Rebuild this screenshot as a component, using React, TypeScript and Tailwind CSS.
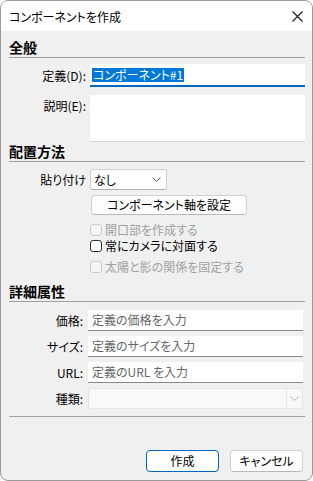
function Chevron({ color }: { color: string }) {
  return (
    <svg width="9" height="5" viewBox="0 0 9 5" fill="none">
      <path d="M0.5 0.5 L4.5 4.5 L8.5 0.5" stroke={color} strokeWidth="1" />
    </svg>
  );
}

function Section({ title }: { title: string }) {
  return (
    <div className="ml-[8px] mr-[7px] flex h-[20px] items-end border-b border-[#a0a0a0] pb-[3px] text-[14px] font-bold leading-none text-black">
      {title}
    </div>
  );
}

function Check({ label, disabled }: { label: string; disabled?: boolean }) {
  return (
    <div className="flex h-[16px] items-center">
      <span
        className={
          disabled
            ? "h-[12px] w-[12px] rounded-[3px] border border-[#cccccc] bg-[#f6f6f6]"
            : "h-[12px] w-[12px] rounded-[3px] border border-[#333333] bg-white"
        }
      />
      <span className={disabled ? "ml-[3px] text-[#a0a0a0]" : "ml-[3px] text-black"}>{label}</span>
    </div>
  );
}

function Field({ label, children }: { label: string; children: React.ReactNode }) {
  return (
    <div className="flex h-[21px] items-center">
      <div className="w-[87px] pr-[5px] text-right">{label}</div>
      <div className="flex h-[21px] flex-1 items-center border-b border-[#8a8a8a] bg-white px-[4px] text-[#666666]">
        {children}
      </div>
    </div>
  );
}

export default function App() {
  return (
    <div className="flex h-[481px] w-[313px] flex-col overflow-hidden rounded-[8px] border border-[#9a9a9a] bg-[#f0f0f0] font-['Noto_Sans_CJK_JP','Noto_Sans',sans-serif] text-[12px] leading-none text-black [font-feature-settings:'palt']">
      {/* Title bar */}
      <div className="flex h-[30px] shrink-0 items-center justify-between bg-white pl-[8px] pr-[9px]">
        <span className="pt-[1px] text-[12px]">コンポーネントを作成</span>
        <svg width="11" height="11" viewBox="0 0 11 11" fill="none">
          <path d="M0.5 0.5 L10.5 10.5 M10.5 0.5 L0.5 10.5" stroke="#1a1a1a" strokeWidth="1.1" />
        </svg>
      </div>

      <div className="flex flex-1 flex-col pt-[7px]">
        <Section title="全般" />

        <div className="mt-[6px] flex flex-col gap-[8px] pr-[7px]">
          <div className="flex h-[23px] items-center">
            <div className="w-[89px] pr-[4px] text-right">定義(D):</div>
            <div className="flex h-[23px] flex-1 items-center border-b-2 border-[#0067c0] bg-white px-[2px]">
              <span className="bg-[#0078d7] px-[1px] py-[1px] text-white">コンポーネント#1</span>
            </div>
          </div>
          <div className="flex h-[47px]">
            <div className="w-[89px] pt-[5px] pr-[4px] text-right">説明(E):</div>
            <div className="flex-1 border-b border-[#d4d4d4] bg-white" />
          </div>
        </div>

        <Section title="配置方法" />

        <div className="mt-[7px] flex flex-col">
          <div className="flex h-[21px] items-center">
            <div className="w-[89px] pr-[4px] text-right">貼り付け</div>
            <div className="flex h-[21px] w-[77px] items-center justify-between rounded-[3px] border border-[#d0d0d0] border-b-[#b0b0b0] bg-white pl-[3px] pr-[5px]">
              <span>なし</span>
              <Chevron color="#666666" />
            </div>
          </div>
          <div className="mt-[5px] pl-[90px]">
            <div className="flex h-[20px] w-[156px] items-center justify-center rounded-[4px] border border-[#d0d0d0] border-b-[#b8b8b8] bg-[#fdfdfd]">
              コンポーネント軸を設定
            </div>
          </div>
          <div className="mt-[7px] flex flex-col pl-[89px]">
            <Check label="開口部を作成する" disabled />
            <Check label="常にカメラに対面する" />
            <div className="mt-[5px]">
              <Check label="太陽と影の関係を固定する" disabled />
            </div>
          </div>
        </div>

        <div className="mt-[7px]">
          <Section title="詳細属性" />
        </div>

        <div className="mt-[8px] flex flex-col gap-[5px] pr-[9px]">
          <Field label="価格:">定義の価格を入力</Field>
          <Field label="サイズ:">定義のサイズを入力</Field>
          <Field label="URL:">
            定義のURL&nbsp;を入力
          </Field>
          <div className="flex h-[21px] items-center">
            <div className="w-[87px] pr-[5px] text-right">種類:</div>
            <div className="flex h-[21px] flex-1 items-center justify-end rounded-[3px] border border-[#e4e4e4] bg-[#f9f9f9]">
              <div className="flex h-full w-[16px] items-center justify-center border-l border-[#e4e4e4]">
                <Chevron color="#b4b4b4" />
              </div>
            </div>
          </div>
        </div>

        <div className="ml-[8px] mr-[7px] mt-[7px] border-b border-[#a0a0a0]" />

        <div className="mt-auto mb-[8px] flex justify-end gap-[11px] pr-[9px]">
          <div className="flex h-[22px] w-[73px] items-center justify-center rounded-[4px] border border-[#0067c0] bg-white">
            作成
          </div>
          <div className="flex h-[22px] w-[73px] items-center justify-center rounded-[4px] border border-[#d0d0d0] border-b-[#b8b8b8] bg-[#fdfdfd]">
            キャンセル
          </div>
        </div>
      </div>
    </div>
  );
}
